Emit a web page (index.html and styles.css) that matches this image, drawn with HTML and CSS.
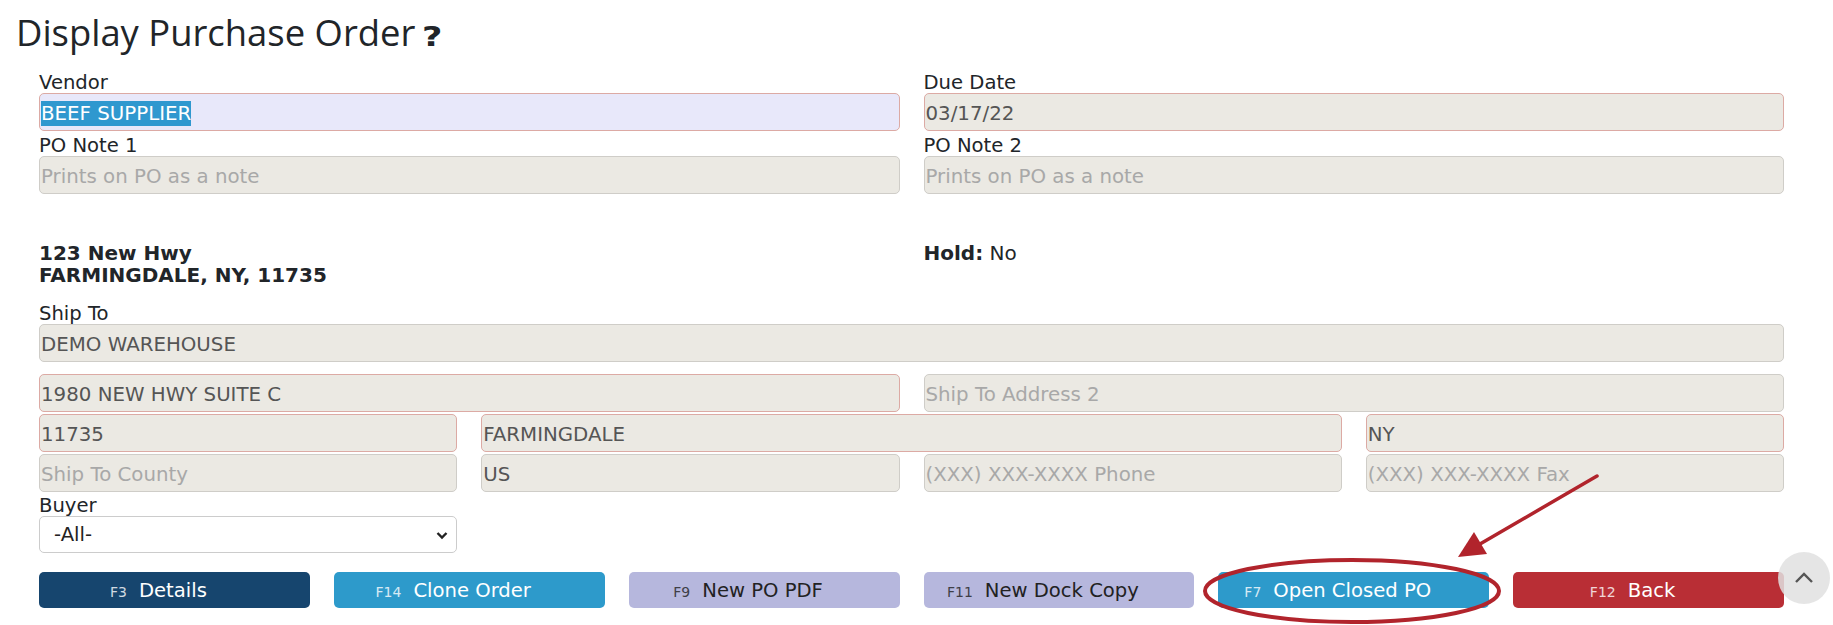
FILE: index.html
```html
<!DOCTYPE html>
<html lang="en">
<head>
<meta charset="utf-8">
<title>Display Purchase Order</title>
<link rel="stylesheet" href="styles.css">
</head>
<body>
<h1 class="title">Display Purchase Order <span class="help">?</span></h1>
<div class="form">
  <div class="grid rows-top">
    <div class="field s2">
      <span class="lbl">Vendor</span>
      <div class="inp req vendor"><span class="hl">BEEF SUPPLIER</span></div>
    </div>
    <div class="field s2">
      <span class="lbl">Due Date</span>
      <div class="inp req">03/17/22</div>
    </div>
    <div class="field s2">
      <span class="lbl">PO Note 1</span>
      <div class="inp ph">Prints on PO as a note</div>
    </div>
    <div class="field s2">
      <span class="lbl">PO Note 2</span>
      <div class="inp ph">Prints on PO as a note</div>
    </div>
  </div>

  <div class="grid addr">
    <div class="s2 bold">123 New Hwy<br>FARMINGDALE, NY, 11735</div>
    <div class="s2"><b>Hold:</b> No</div>
  </div>

  <div class="ship">
    <span class="lbl">Ship To</span>
    <div class="inp">DEMO WAREHOUSE</div>
  </div>

  <div class="grid row-a">
    <div class="inp req s2">1980 NEW HWY SUITE C</div>
    <div class="inp ph s2">Ship To Address 2</div>
  </div>
  <div class="grid row-b">
    <div class="inp req">11735</div>
    <div class="inp req s2">FARMINGDALE</div>
    <div class="inp req">NY</div>
  </div>
  <div class="grid row-b">
    <div class="inp ph">Ship To County</div>
    <div class="inp">US</div>
    <div class="inp ph">(XXX) XXX-XXXX Phone</div>
    <div class="inp ph">(XXX) XXX-XXXX Fax</div>
  </div>

  <div class="grid">
    <div class="buyer">
      <span class="lbl">Buyer</span>
      <div class="select">
        <span>-All-</span>
        <svg class="chev" width="14" height="10" viewBox="0 0 14 10"><path d="M2.5 3 L7 7.5 L11.5 3" fill="none" stroke="#222" stroke-width="2.4"/></svg>
      </div>
    </div>
  </div>

  <div class="btns">
    <div class="btn navy"><span><small class="fk">F3</small>Details</span></div>
    <div class="btn blue"><span><small class="fk">F14</small>Clone Order</span></div>
    <div class="btn lav"><span><small class="fk">F9</small>New PO PDF</span></div>
    <div class="btn lav"><span><small class="fk">F11</small>New Dock Copy</span></div>
    <div class="btn blue"><span><small class="fk">F7</small>Open Closed PO</span></div>
    <div class="btn red"><span><small class="fk">F12</small>Back</span></div>
  </div>
</div>

<div class="totop">
  <svg width="22" height="14" viewBox="0 0 22 14"><path d="M3 11 L11 3 L19 11" fill="none" stroke="#555" stroke-width="2.4"/></svg>
</div>

<svg class="annot" width="1833" height="625" viewBox="0 0 1833 625">
  <ellipse cx="1352" cy="591" rx="147" ry="31" fill="none" stroke="#b1242c" stroke-width="4"/>
  <line x1="1597" y1="476" x2="1480" y2="544" stroke="#b1242c" stroke-width="3.5" stroke-linecap="round"/>
  <polygon points="1458,557 1487,554 1474,532" fill="#b1242c"/>
</svg>
</body>
</html>
```

FILE: styles.css
```css
* { box-sizing: border-box; }

html, body {
  margin: 0;
  background: #fff;
}

body {
  position: relative;
  height: 625px;
  overflow: hidden;
  font-family: "DejaVu Sans", Verdana, sans-serif;
  color: #212529;
}

.title {
  margin: 8px 0 0 16px;
  font: 400 36.4px/49px "Open Sans", sans-serif;
  color: #212529;
}

.help {
  display: inline-block;
  font: 700 27px "DejaVu Sans", sans-serif;
  margin-left: -3px;
  transform: scaleX(1.3);
  transform-origin: left center;
}

.form {
  padding: 12px 49px 0 39px;
}

.grid {
  display: grid;
  grid-template-columns: repeat(4, 1fr);
  column-gap: 24px;
}

.s2 { grid-column: span 2; }

.rows-top { row-gap: 1px; }

.lbl {
  display: block;
  font-size: 19.6px;
  line-height: 24px;
  height: 24px;
  padding-top: 2px;
  color: #212529;
}

.inp {
  height: 38px;
  border: 1px solid #cfcdc8;
  border-radius: 5px;
  background: #ebe9e3;
  font-size: 19.8px;
  line-height: 36px;
  padding: 2px 1px 0;
  color: #555;
  white-space: nowrap;
  overflow: hidden;
}

.req { border-color: #dcaaa4; }
.ph { color: #a8a8a8; }
.vendor { background: #e8e8fa; }

.hl {
  background: #2f98cf;
  color: #fff;
  padding: 1px 0;
}

.addr {
  margin-top: 48px;
  font-size: 20px;
  line-height: 22px;
}

.bold { font-weight: 700; }

.ship { margin-top: 14px; }

.row-a { margin-top: 12px; }
.row-b { margin-top: 2px; }

.select {
  height: 37px;
  border: 1px solid #cccccc;
  border-radius: 5px;
  background: #fff;
  display: flex;
  align-items: center;
  justify-content: space-between;
  padding: 0 7px 0 14px;
  font-size: 19.6px;
  color: #222;
}

.btns {
  display: grid;
  grid-template-columns: repeat(6, 1fr);
  column-gap: 24px;
  margin-top: 19px;
}

.btn {
  height: 36px;
  border-radius: 5px;
  display: flex;
  align-items: center;
  justify-content: center;
  padding-right: 32px;
  font-size: 19.6px;
  color: #fff;
  white-space: nowrap;
}

.fk {
  font-size: 14px;
  margin-right: 12px;
  opacity: 0.8;
}

.navy { background: #16456e; }
.blue { background: #2d9acb; }
.lav { background: #b6b7dd; color: #222; }
.red { background: #b92e35; }

.totop {
  position: absolute;
  left: 1778px;
  top: 552px;
  width: 52px;
  height: 52px;
  border-radius: 50%;
  background: rgba(225, 225, 225, 0.85);
  display: flex;
  align-items: center;
  justify-content: center;
}

.annot {
  position: absolute;
  left: 0;
  top: 0;
  pointer-events: none;
}
```
